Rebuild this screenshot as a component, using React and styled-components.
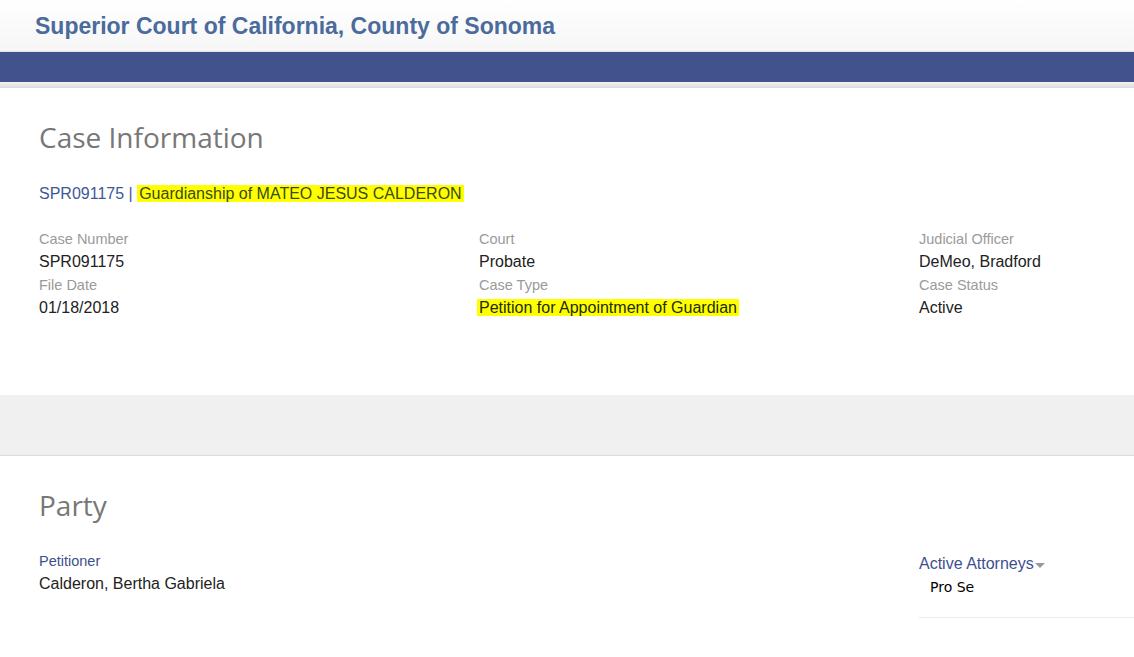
import React from "react";
import styled, { createGlobalStyle } from "styled-components";

const Global = createGlobalStyle`
  html, body { margin: 0; padding: 0; background: #f0f0f0; }
  body { font-family: "Liberation Sans", Arial, sans-serif; }
`;

const Page = styled.div`
  width: 1134px;
  height: 657px;
  overflow: hidden;
  background: #f0f0f0;
`;

const Header = styled.header`
  height: 51px;
  border-bottom: 1px solid #e2e2e2;
  background: linear-gradient(#ffffff, #f6f6f6);
  display: flex;
  align-items: center;
  padding-left: 35px;
`;

const Title = styled.h1`
  margin: 0 0 -2px;
  font-family: "Liberation Sans", Arial, sans-serif;
  font-weight: bold;
  font-size: 23px;
  color: #4a6b9c;
`;

const NavBar = styled.div`
  height: 30px;
  background: #41528c;
`;

const Shade = styled.div`
  height: 6px;
  background: linear-gradient(#f1f1f1, #dcdcdc);
`;

const Card = styled.section`
  background: #ffffff;
  padding: ${p => p.$pad};
  min-height: ${p => p.$h};
  box-sizing: border-box;
  box-shadow: 0 1px 2px rgba(0, 0, 0, 0.18);
  border-top: ${p => (p.$top ? "1px solid #dcdcdc" : "none")};
`;

const Gap = styled.div`
  height: 60px;
  background: #f0f0f0;
`;

const SectionTitle = styled.h2`
  margin: 0;
  font-family: "Open Sans", "DejaVu Sans", sans-serif;
  font-weight: 400;
  font-size: 28px;
  color: #777777;
  line-height: 34px;
`;

const CaseLine = styled.div`
  margin-top: 30px;
  font-size: 16px;
  color: #3e5897;
  line-height: 20px;
`;

const Highlight = styled.span`
  background: #ffff00;
  color: #3a4a1a;
  padding: 0 2px;
`;

const Grid = styled.div`
  display: grid;
  grid-template-columns: 440px 440px 1fr;
  margin-top: 24px;
`;

const Field = styled.div`
  display: flex;
  flex-direction: column;
`;

const Label = styled.div`
  font-size: 14.5px;
  line-height: 22px;
  color: ${p => (p.$blue ? "#3e4f8e" : "#9a9a9a")};
`;

const Value = styled.div`
  font-size: 16px;
  line-height: 23.5px;
  color: #222222;
`;

const Marked = styled.span`
  background: #ffff00;
  margin-left: -2px;
  padding: 0 2px;
  color: #1d2b0f;
`;

const PartyRow = styled.div`
  display: grid;
  grid-template-columns: 880px 1fr;
  margin-top: 28px;
`;

const Attorneys = styled.div`
  margin-top: 4px;
  border-bottom: 1px solid #ebebeb;
  padding-bottom: 22px;
`;

const AttyHead = styled.div`
  font-size: 16px;
  color: #3e4f8e;
  line-height: 20px;
  display: flex;
  align-items: center;
`;

const Caret = styled.span`
  width: 0;
  height: 0;
  border-left: 5px solid transparent;
  border-right: 5px solid transparent;
  border-top: 5px solid #999999;
  margin-left: 1px;
  margin-top: 2px;
`;

const AttyName = styled.div`
  font-family: "DejaVu Sans", Verdana, sans-serif;
  font-size: 14px;
  color: #000;
  padding-left: 11px;
  margin-top: 5px;
  line-height: 16px;
`;

export default function App() {
  return (
    <Page>
      <Global />
      <Header>
        <Title>Superior Court of California, County of Sonoma</Title>
      </Header>
      <NavBar />
      <Shade />
      <Card $pad="32px 39px 0" $h="307px">
        <SectionTitle>Case Information</SectionTitle>
        <CaseLine>
          SPR091175 | <Highlight>Guardianship of MATEO JESUS CALDERON</Highlight>
        </CaseLine>
        <Grid>
          <Field>
            <Label>Case Number</Label>
            <Value>SPR091175</Value>
            <Label>File Date</Label>
            <Value>01/18/2018</Value>
          </Field>
          <Field>
            <Label>Court</Label>
            <Value>Probate</Value>
            <Label>Case Type</Label>
            <Value><Marked>Petition for Appointment of Guardian</Marked></Value>
          </Field>
          <Field>
            <Label>Judicial Officer</Label>
            <Value>DeMeo, Bradford</Value>
            <Label>Case Status</Label>
            <Value>Active</Value>
          </Field>
        </Grid>
      </Card>
      <Gap />
      <Card $pad="32px 0 0 39px" $h="220px" $top>
        <SectionTitle>Party</SectionTitle>
        <PartyRow>
          <Field>
            <Label $blue>Petitioner</Label>
            <Value>Calderon, Bertha Gabriela</Value>
          </Field>
          <Attorneys>
            <AttyHead>Active Attorneys<Caret /></AttyHead>
            <AttyName>Pro Se</AttyName>
          </Attorneys>
        </PartyRow>
      </Card>
    </Page>
  );
}
